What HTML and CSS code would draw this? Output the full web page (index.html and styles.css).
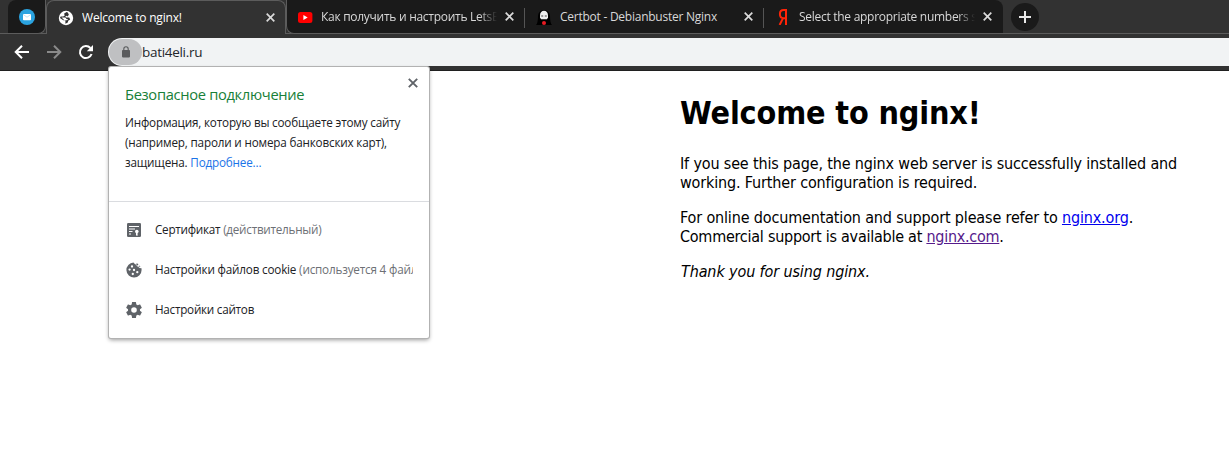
FILE: index.html
```html
<!DOCTYPE html>
<html lang="ru">
<head>
<meta charset="utf-8">
<title>Welcome to nginx!</title>
<link rel="stylesheet" href="styles.css">
</head>
<body>
<div class="browser">
  <div class="tabstrip">
    <div class="tab pinned">
      <svg width="16" height="16" viewBox="0 0 16 16"><circle cx="8" cy="8" r="8" fill="#2aa3e0"/><rect x="4" y="5" width="8" height="6.200" rx=".8" fill="#fff"/><path d="M4.200 5.500 8 8.200l3.800-2.700" fill="none" stroke="#a9d8f2" stroke-width=".7"/></svg>
    </div>
    <div class="tab active">
      <svg class="fav" width="16" height="16" viewBox="0 0 16 16"><circle cx="8" cy="8" r="7.200" fill="#fff"/><path d="M8.500 2 6 3.800l.8 1.600-1.600 1.200H2.600L2 8l3.200 2.200h2.200v3.600l2.400-1.400.4-1.600 2-1.200-1-2H8.400L7.200 6.400l1.400-.6 1.200.6 1-2-1-2z" fill="#323232"/><path d="M3.500 7.600h4l1 1.400h1.600l-1 1.200H6.400z" fill="#fff"/></svg>
      <span class="title">Welcome to nginx!</span>
      <svg class="close" width="9" height="9" viewBox="0 0 9 9"><path d="M.7.7l7.600 7.600M8.300.7.7 8.300"/></svg>
    </div>
    <div class="tab video">
      <svg class="fav" width="16" height="16" viewBox="0 0 16 16"><rect x="1" y="3" width="14.400" height="11" rx="2.500" fill="#f00"/><path d="M6.400 6v5l4.300-2.500z" fill="#fff"/></svg>
      <span class="title fade">Как получить и настроить LetsEn</span>
      <svg class="close" width="9" height="9" viewBox="0 0 9 9"><path d="M.7.7l7.600 7.600M8.300.7.7 8.300"/></svg>
    </div>
    <div class="tab divided">
      <svg class="fav" width="16" height="16" viewBox="0 0 16 16"><path d="M0 16q2-2 2-9a6 6 0 0 1 12 0q0 7 2 9z" fill="#000"/><path d="M4 6.500a4 4.800 0 0 1 8 0v2l-1 1.700H5l-1-1.700z" fill="#eee"/><path d="M5.200 6.400h2v1h-2zM8.800 6.400h2v1h-2z" fill="#444"/><circle cx="8" cy="14" r="2" fill="#e81b23"/></svg>
      <span class="title">Certbot - Debianbuster Nginx</span>
      <svg class="close" width="9" height="9" viewBox="0 0 9 9"><path d="M.7.7l7.600 7.600M8.300.7.7 8.300"/></svg>
    </div>
    <div class="tab divided last">
      <svg class="fav" width="16" height="16" viewBox="0 0 16 16"><path d="M11 0v16M11 1H8.600C6.200 1 4.900 2.600 4.900 5s1.300 4.200 3.700 4.200H11M7.900 9.400 4.600 16" fill="none" stroke="#ff2408" stroke-width="2"/></svg>
      <span class="title fade">Select the appropriate numbers s</span>
      <svg class="close" width="9" height="9" viewBox="0 0 9 9"><path d="M.7.7l7.600 7.600M8.300.7.7 8.300"/></svg>
    </div>
    <div class="newtab"><svg width="12" height="12" viewBox="0 0 12 12"><path d="M6 0v12M0 6h12" stroke="#e8e8e8" stroke-width="2"/></svg></div>
  </div>
  <div class="toolbar">
    <svg class="nav" width="16" height="16" viewBox="0 0 16 16"><path d="M15 8H2.500M8 1.700 1.700 8 8 14.300"/></svg>
    <svg class="nav dim" width="16" height="16" viewBox="0 0 16 16"><path d="M1 8h12.500M8 1.700 14.300 8 8 14.300"/></svg>
    <svg class="nav" width="16" height="16" viewBox="0 0 16 16"><path d="M13.600 10A6 6 0 1 1 12.400 4"/><path class="solid" d="M15 1v6.200H8.800z"/></svg>
    <div class="address">
      <div class="lock"><svg width="10" height="12" viewBox="0 0 10 12"><rect x="1" y="4" width="8" height="7.400" rx=".8" fill="#5a5b5d"/><path d="M2.800 4.500V3a2.200 2.200 0 0 1 4.400 0v1.500" fill="none" stroke="#5a5b5d" stroke-width="1.100"/></svg></div>
      <span class="url">bati4eli.ru</span>
    </div>
  </div>
  <main class="page">
    <h1>Welcome to nginx!</h1>
    <p>If you see this page, the nginx web server is successfully installed and<br>working. Further configuration is required.</p>
    <p>For online documentation and support please refer to <a class="link">nginx.org</a>.<br><span class="commercial">Commercial support is available at <a class="link seen">nginx.com</a>.</span></p>
    <p class="thanks"><em>Thank you for using nginx.</em></p>
  </main>
  <div class="popup">
    <div class="summary">
      <svg class="dismiss" width="10" height="10" viewBox="0 0 10 10"><path d="M.8.8l8.400 8.400M9.200.8.8 9.200"/></svg>
      <h2>Безопасное подключение</h2>
      <div class="info">Информация, которую вы сообщаете этому сайту<br>(например, пароли и номера банковских карт),<br>защищена. <a>Подробнее...</a></div>
    </div>
    <div class="row">
      <svg width="16" height="16" viewBox="0 0 16 16"><rect x="1" y="1" width="14" height="14" rx="1.200" fill="#5f6368"/><path d="M3 4.500h10M3 7h6M3 9.500h3.500M3 12h2" stroke="#fff" stroke-width="1"/><circle cx="10.800" cy="9.500" r="1.800" fill="#fff"/><path d="M10 10.500h1.600V14l-.8-.8-.8.8z" fill="#fff"/></svg>
      <span class="label">Сертификат <i>(действительный)</i></span>
    </div>
    <div class="row cookies">
      <svg width="16" height="16" viewBox="0 0 16 16"><path d="M7.500.4A7.600 7.600 0 1 0 15.600 8c0-.7-.1-1.300-.3-1.900-1.300.5-2.600-.2-2.800-1.500-1.300.2-2.300-.9-2-2.100C9.300 2.400 8.300 1.600 7.500.4z" fill="#5f6368"/><path d="M10.500 1.200l1.800.7-.3 1.500-1.500-.5zM13.400 3.300l1 1.400-1.100.5z" fill="#5f6368"/><g fill="#fff"><circle cx="6" cy="4.500" r="1.150"/><circle cx="3.600" cy="7.600" r="1.150"/><circle cx="8" cy="8" r="1.150"/><circle cx="6.800" cy="12" r="1.150"/><circle cx="11.300" cy="10.200" r="1.150"/></g></svg>
      <span class="label">Настройки файлов cookie <i>(используется 4 файлов)</i></span>
    </div>
    <div class="row">
      <svg width="16" height="16" viewBox="2 2 20 20"><path d="M19.430 12.980c.04-.32.07-.64.07-.98s-.03-.66-.07-.98l2.110-1.650c.19-.15.24-.42.12-.64l-2-3.460c-.12-.22-.39-.3-.61-.22l-2.490 1c-.52-.4-1.080-.73-1.690-.98l-.38-2.650A.488.488 0 0 0 14 2h-4c-.25 0-.46.18-.49.42l-.38 2.650c-.61.25-1.170.59-1.690.98l-2.490-1c-.23-.09-.49 0-.61.22l-2 3.460c-.13.22-.07.49.12.64l2.110 1.650c-.04.32-.07.65-.07.98s.03.66.07.98l-2.110 1.650c-.19.15-.24.42-.12.64l2 3.460c.12.22.39.3.61.22l2.490-1c.52.4 1.080.73 1.690.98l.38 2.650c.03.24.24.42.49.42h4c.25 0 .46-.18.49-.42l.38-2.650c.61-.25 1.170-.59 1.690-.98l2.490 1c.23.09.49 0 .61-.22l2-3.460c.12-.22.07-.49-.12-.64zM12 15.500a3.500 3.500 0 1 1 0-7 3.500 3.500 0 0 1 0 7z" fill="#5f6368"/></svg>
      <span class="label">Настройки сайтов</span>
    </div>
  </div>
</div>
</body>
</html>
```
FILE: styles.css
```css
* { box-sizing: border-box; }
body { margin: 0; background: #fff; color: #000; font-family: "Open Sans", "Noto Sans", sans-serif; }
svg { display: block; flex: none; }
.browser { position: relative; height: 459px; overflow: hidden; }

.tabstrip { display: flex; height: 34px; padding-left: 8px; background: linear-gradient(#5c5c5c, #5c5c5c) 0 100% / 100% 1px no-repeat #323232; }
.tab { display: flex; align-items: center; position: relative; width: 239px; height: 34px; padding: 0 11px 0 11px; background: #1a1a1a; border-bottom: 1px solid #5c5c5c; }
.pinned { width: 38px; justify-content: center; padding: 0; border-radius: 8px 0 8px 0; border-right: 1px solid #5c5c5c; }
.active { width: 240px; background: #323232; border: 1px solid #5c5c5c; border-bottom: 0; border-radius: 8px 8px 0 0; padding: 0 10px 0 11px; }
.video { border-left: 1px solid #5c5c5c; border-radius: 0 0 0 8px; padding-left: 10px; }
.divided::before { content: ""; position: absolute; left: -1px; top: 8px; width: 1px; height: 20px; background: #555; }
.last { border-top-right-radius: 8px; }
.title { width: 176px; margin-left: 8px; font-size: 12px; line-height: 20px; letter-spacing: -.25px; white-space: nowrap; overflow: hidden; color: #d8d8d8; }
.active .title { color: #fff; letter-spacing: -.2px; }
.video .title { letter-spacing: -.28px; }
.last .title { letter-spacing: -.28px; }
.fade { -webkit-mask-image: linear-gradient(90deg, #000 90%, transparent); mask-image: linear-gradient(90deg, #000 90%, transparent); }
.close { margin-left: auto; fill: none; stroke: #dadada; stroke-width: 1.7; }
.newtab { display: flex; align-items: center; justify-content: center; width: 28px; height: 28px; margin: 3px 0 0 8px; border-radius: 50%; background: #1a1a1a; }

.toolbar { display: flex; align-items: center; height: 37px; padding: 0 0 0 14px; gap: 16px; background: #323232; border-bottom: 1px solid #202020; }
.nav { fill: none; stroke: #fff; stroke-width: 2; }
.nav .solid { fill: #fff; stroke: none; }
.nav.dim { stroke: #8a8a8a; }
.address { display: flex; align-items: center; flex: 1; height: 28px; margin-left: -2px; padding-left: 1px; border-radius: 14px 0 0 14px; background: #f1f3f4; }
.lock { display: flex; align-items: center; justify-content: center; width: 33px; height: 26px; border-radius: 13px; background: #bfc0c2; }
.url { font-size: 13.5px; line-height: 20px; letter-spacing: -.3px; color: #24272b; }

.page { padding: 22px 0 0 680px; font-family: "DejaVu Sans Condensed", "DejaVu Sans", sans-serif; font-stretch: condensed; font-size: 16px; line-height: 19px; letter-spacing: -.155px; white-space: nowrap; }
.page h1 { margin: 0 0 21px; font-size: 32px; font-weight: bold; line-height: 40px; letter-spacing: -.14px; }
.page p { margin: 0 0 16px; }
.commercial { letter-spacing: -.25px; }
.page .thanks { padding-left: 1px; letter-spacing: -.12px; }
.link { color: #00e; text-decoration: underline; }
.seen { color: #551a8b; }

.popup { position: absolute; left: 109px; top: 67px; width: 320px; height: 271px; background: #fff; border-radius: 2px; box-shadow: 0 0 0 1px #b2b2b2, 0 2px 4px rgba(0,0,0,.4); }
.summary { position: relative; height: 135px; padding: 16px; border-bottom: 1px solid #dadce0; margin-bottom: 8px; }
.dismiss { position: absolute; right: 11px; top: 11px; stroke: #5f6368; stroke-width: 1.9; }
.popup h2 { margin: 0; font-size: 14.7px; font-weight: 400; line-height: 22px; letter-spacing: -.32px; color: #188038; white-space: nowrap; }
.info { margin-top: 7px; font-size: 11.7px; line-height: 20px; letter-spacing: -.18px; color: #202124; white-space: nowrap; }
.info a { color: #1a73e8; }
.row { display: flex; align-items: center; height: 40px; padding: 0 16px 0 17px; gap: 13px; font-size: 11.7px; line-height: 20px; letter-spacing: -.25px; color: #202124; }
.cookies { letter-spacing: -.18px; }
.label { flex: 1; margin-bottom: 2px; overflow: hidden; white-space: nowrap; }
.label i { font-style: normal; color: #6d7075; }
```
